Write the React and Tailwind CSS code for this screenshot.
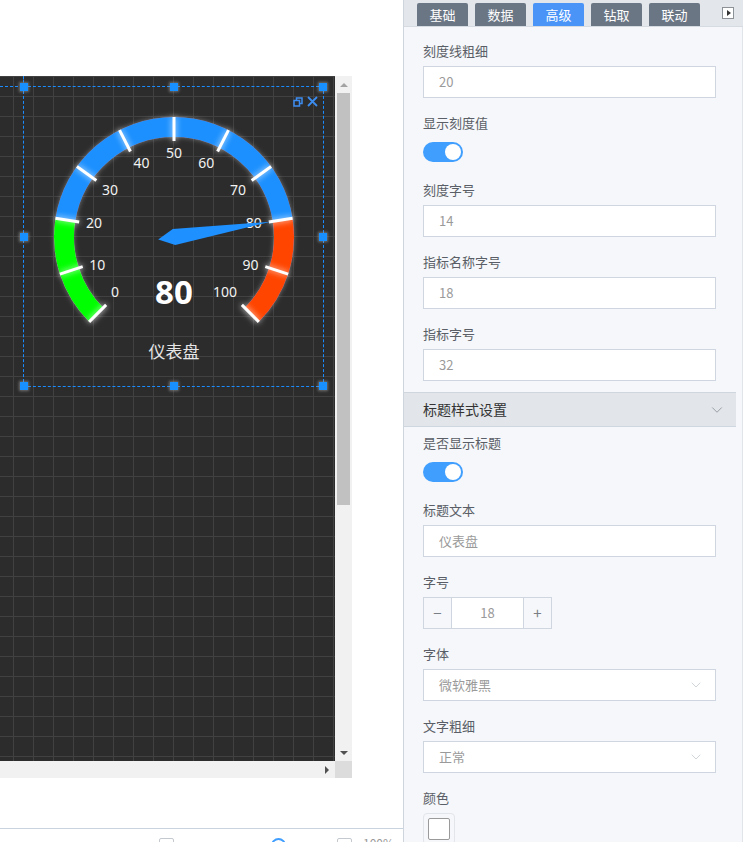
import { ChevronDown } from 'lucide-react'

const CX = 150
const CY = 150

const pt = (r, deg) => {
  const a = (deg * Math.PI) / 180
  return [CX + r * Math.cos(a), CY - r * Math.sin(a)]
}

const arc = (a0, a1, r) => {
  const [x0, y0] = pt(r, a0)
  const [x1, y1] = pt(r, a1)
  const large = a0 - a1 > 180 ? 1 : 0
  return `M${x0} ${y0} A${r} ${r} 0 ${large} 1 ${x1} ${y1}`
}

const toAngle = (v) => 225 - 2.7 * v

const bands = [
  { from: 0, to: 20, color: '#00ff00' },
  { from: 20, to: 80, color: '#1e90ff' },
  { from: 80, to: 100, color: '#ff4500' },
]

const ticks = [0, 10, 20, 30, 40, 50, 60, 70, 80, 90, 100]

function labelProps(v) {
  const deg = toAngle(v)
  const a = (deg * Math.PI) / 180
  const ux = Math.cos(a)
  const uy = -Math.sin(a)
  const [x, y] = pt(89, deg)
  const anchor = ux < -0.4 ? 'start' : ux > 0.4 ? 'end' : 'middle'
  const dy = uy < -0.4 ? 10 : uy > 0.4 ? -3 : 5
  return { x, y: y + dy, textAnchor: anchor }
}

function needlePoints(value) {
  const deg = (toAngle(value) * Math.PI) / 180
  const ux = Math.cos(deg)
  const uy = -Math.sin(deg)
  const vx = -uy
  const vy = ux
  const p = (u, v) => `${CX + u * ux + v * vx},${CY + u * uy + v * vy}`
  return [p(98, 0), p(0, 8), p(-16, 0), p(0, -8)].join(' ')
}

function Gauge() {
  return (
    <svg width="300" height="300" viewBox="0 0 300 300" className="absolute left-0 top-0">
      <defs>
        <filter id="glow" x="-20%" y="-20%" width="140%" height="140%">
          <feDropShadow dx="0" dy="0" stdDeviation="2.5" floodColor="#ffffff" floodOpacity="0.35" />
        </filter>
        <filter id="tickglow" x="-50%" y="-50%" width="200%" height="200%">
          <feDropShadow dx="0" dy="0" stdDeviation="3" floodColor="#ffffff" floodOpacity="0.9" />
        </filter>
      </defs>
      <g filter="url(#glow)">
        {bands.map((b) => (
          <path key={b.from} d={arc(toAngle(b.from), toAngle(b.to), 110)} stroke={b.color} strokeWidth="20" fill="none" />
        ))}
      </g>
      <g filter="url(#tickglow)">
        {ticks.map((v) => {
          const [x0, y0] = pt(96, toAngle(v))
          const [x1, y1] = pt(120, toAngle(v))
          return <line key={v} x1={x0} y1={y0} x2={x1} y2={y1} stroke="#fff" strokeWidth="3" />
        })}
      </g>
      <g fill="#f2f2f2" fontSize="14" fontFamily="'Noto Sans', 'Open Sans', sans-serif">
        {ticks.map((v) => (
          <text key={v} {...labelProps(v)}>
            {v}
          </text>
        ))}
      </g>
      <polygon points={needlePoints(80)} fill="#1e90ff" />
      <text x="150" y="217" textAnchor="middle" fill="#fff" fontSize="33" fontWeight="700" fontFamily="'Noto Sans', 'Open Sans', sans-serif">
        80
      </text>
      <text x="150" y="271" textAnchor="middle" fill="#e6e6e6" fontSize="17" fontFamily="'Noto Sans CJK SC', sans-serif">
        仪表盘
      </text>
    </svg>
  )
}

function Handle({ className }) {
  return <div className={`absolute h-[8px] w-[8px] -translate-x-1/2 -translate-y-1/2 bg-[#1890ff] shadow-[0_0_3px_1px_rgba(160,160,160,0.6)] ${className}`} />
}

function Canvas() {
  return (
    <div className="relative h-[685px] w-[335px] overflow-hidden bg-[#2c2c2c] bg-[linear-gradient(to_right,#414141_1px,transparent_1px),linear-gradient(to_bottom,#414141_1px,transparent_1px)] bg-size-[20px_20px] bg-position-[13px_0px]">
      {/* extra selection guide lines */}
      <div className="absolute left-0 top-[10px] w-[23px] border-t border-dashed border-[#1a8cff]" />
      <div className="absolute left-[23px] top-0 h-[10px] border-l border-dashed border-[#1a8cff]" />

      <div className="absolute left-[23px] top-[10px] h-[301px] w-[301px] border border-dashed border-[#1a8cff]">
        <Gauge />
        <div className="absolute right-[5px] top-[9px] flex items-center gap-[4px]">
          <svg width="10" height="10" viewBox="0 0 10 10" fill="none" stroke="#3c8cf0" strokeWidth="1.5">
            <path d="M3.5 3V1H9V6.5H7" />
            <rect x="1" y="3.5" width="5.5" height="5.5" />
          </svg>
          <svg width="11" height="11" viewBox="0 0 11 11" stroke="#3c8cf0" strokeWidth="1.8">
            <path d="M1 1L10 10M10 1L1 10" />
          </svg>
        </div>
        <Handle className="left-0 top-0" />
        <Handle className="left-1/2 top-0" />
        <Handle className="left-full top-0" />
        <Handle className="left-0 top-1/2" />
        <Handle className="left-full top-1/2" />
        <Handle className="left-0 top-full" />
        <Handle className="left-1/2 top-full" />
        <Handle className="left-full top-full" />
      </div>
    </div>
  )
}

function Label({ children }) {
  return <div className="mb-[5px] flex h-[20px] items-center text-[13px] text-[#5a5e66]">{children}</div>
}

function TextInput({ value }) {
  return (
    <div className="mb-[15px] flex h-[32px] w-[293px] items-center border border-[#d0d6df] bg-white pl-[15px] text-[13px] text-[#9a9a9a]">
      {value}
    </div>
  )
}

function Toggle() {
  return (
    <div className="mb-[14px] flex h-[28px] items-center">
      <div className="flex h-[20px] w-[40px] items-center justify-end rounded-full bg-[#409eff] pr-[2px]">
        <div className="h-[16px] w-[16px] rounded-full bg-white" />
      </div>
    </div>
  )
}

function Select({ value }) {
  return (
    <div className="mb-[15px] flex h-[32px] w-[293px] items-center justify-between border border-[#d0d6df] bg-white pl-[15px] pr-[11px] text-[13px] text-[#9a9a9a]">
      <span>{value}</span>
      <ChevronDown size={16} strokeWidth={1} color="#b8bec8" />
    </div>
  )
}

const tabs = ['基础', '数据', '高级', '钻取', '联动']

function Panel() {
  return (
    <aside className="flex h-full w-[340px] shrink-0 flex-col border-l border-[#cfd5dd] bg-[#f5f7fa]">
      <div className="flex h-[27px] shrink-0 items-end border-b border-[#d6dbe2] bg-[#e3e7eb] pl-[13px]">
        <div className="flex gap-[7px]">
          {tabs.map((t) => (
            <div
              key={t}
              className={`flex h-[23px] w-[51px] items-center justify-center rounded-t-[2px] text-[13px] text-white ${t === '高级' ? 'bg-[#4a94f8]' : 'bg-[#6b7685]'}`}
            >
              {t}
            </div>
          ))}
        </div>
        <div className="mb-[7px] ml-auto mr-[9px] flex h-[12px] w-[12px] items-center justify-center self-end border border-[#8d9299] bg-white">
          <div className="ml-[1px] h-0 w-0 border-y-[3px] border-l-[4px] border-y-transparent border-l-[#333]" />
        </div>
      </div>

      <div className="flex flex-1">
        <div className="w-[332px]">
          <div className="px-[19px] pt-[14px]">
            <Label>刻度线粗细</Label>
            <TextInput value="20" />
            <Label>显示刻度值</Label>
            <Toggle />
            <Label>刻度字号</Label>
            <TextInput value="14" />
            <Label>指标名称字号</Label>
            <TextInput value="18" />
            <Label>指标字号</Label>
            <TextInput value="32" />
          </div>

          <div className="mt-[-4px] flex h-[35px] items-center justify-between border-y border-[#cfd6de] bg-[#e2e6ea] pl-[19px] pr-[10px] text-[14px] text-[#333]">
            <span>标题样式设置</span>
            <ChevronDown size={18} strokeWidth={1} color="#7d848e" />
          </div>

          <div className="px-[19px] pt-[6px]">
            <Label>是否显示标题</Label>
            <Toggle />
            <Label>标题文本</Label>
            <TextInput value="仪表盘" />
            <Label>字号</Label>
            <div className="mb-[15px] flex h-[32px] w-[129px] border border-[#d0d6df] bg-white text-[#7a7e85]">
              <div className="flex w-[28px] items-center justify-center border-r border-[#d0d6df] bg-[#f5f7fa] text-[15px]">−</div>
              <div className="flex flex-1 items-center justify-center text-[13px] text-[#9a9a9a]">18</div>
              <div className="flex w-[28px] items-center justify-center border-l border-[#d0d6df] bg-[#f5f7fa] text-[15px]">+</div>
            </div>
            <Label>字体</Label>
            <Select value="微软雅黑" />
            <Label>文字粗细</Label>
            <Select value="正常" />
            <Label>颜色</Label>
            <div className="flex h-[32px] w-[32px] items-center justify-center rounded-[4px] border border-[#e2e5ea] bg-[#f5f7fa]">
              <div className="h-[22px] w-[22px] rounded-[2px] border border-[#9a9a9a] bg-white" />
            </div>
          </div>
        </div>
        <div className="w-[7px] border-r border-[#e1e5ea]" />
      </div>
    </aside>
  )
}

export default function App() {
  return (
    <div className="flex h-[842px] w-[743px] overflow-hidden bg-white font-['Noto_Sans_CJK_SC','Noto_Sans',sans-serif]">
      <div className="flex w-[403px] shrink-0 flex-col">
        <div className="h-[76px] shrink-0" />
        <div className="flex w-[352px] shrink-0">
          <Canvas />
          <div className="flex h-[685px] w-[17px] flex-col items-center bg-[#f1f1f1]">
            <div className="flex h-[17px] items-center justify-center">
              <div className="h-0 w-0 border-x-[4px] border-b-[4px] border-x-transparent border-b-[#a3a3a3]" />
            </div>
            <div className="h-[412px] w-[13px] bg-[#c1c1c1]" />
            <div className="flex-1" />
            <div className="flex h-[17px] items-center justify-center">
              <div className="h-0 w-0 border-x-[4px] border-t-[4px] border-x-transparent border-t-[#505050]" />
            </div>
          </div>
        </div>
        <div className="flex h-[17px] w-[352px] shrink-0">
          <div className="flex w-[335px] items-center justify-end bg-[#f1f1f1] pr-[6px]">
            <div className="h-0 w-0 border-y-[4px] border-l-[4px] border-y-transparent border-l-[#505050]" />
          </div>
          <div className="w-[17px] bg-[#dcdcdc]" />
        </div>
        <div className="h-[50px] shrink-0" />
        <div className="flex shrink-0 items-start border-t border-[#c9d3df] pt-[9px] text-[12px] text-[#999]">
          <div className="ml-[159px] h-[15px] w-[15px] rounded-[2px] border border-[#c4c8cf]" />
          <div className="ml-[97px] h-[15px] w-[15px] rounded-full border-2 border-[#409eff]" />
          <div className="ml-[51px] flex h-[15px] w-[15px] justify-center rounded-[2px] border border-[#c4c8cf]">
            <div className="mt-[3px] h-[8px] w-px bg-[#999]" />
          </div>
          <div className="ml-[11px] mt-[-2px] leading-[14px]">100%</div>
        </div>
      </div>
      <Panel />
    </div>
  )
}
